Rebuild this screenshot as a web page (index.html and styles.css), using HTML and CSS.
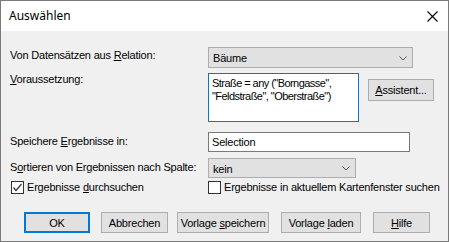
FILE: index.html
```html
<!DOCTYPE html>
<html lang="de">
<head>
    <meta charset="UTF-8">
    <title>Auswählen</title>
    <link rel="stylesheet" href="styles.css">
</head>
<body>
    <div class="window">
        <div class="titlebar">
            <span class="title">Auswählen</span>
            <span class="close">
                <svg width="11" height="11" viewBox="0 0 11 11"><path d="M0.5 0.5 L10.5 10.5 M10.5 0.5 L0.5 10.5" stroke="#000" stroke-width="1.1" fill="none"/></svg>
            </span>
        </div>

        <div class="dialog">
            <div class="row row-relation">
                <label class="lbl">Von Datensätzen aus <u>R</u>elation:</label>
                <div class="combo combo-wide">
                    <span>Bäume</span>
                    <svg class="arrow" width="8" height="5" viewBox="0 0 8 5"><path d="M0.5 0.5 L4 4 L7.5 0.5" stroke="#555" fill="none"/></svg>
                </div>
            </div>

            <div class="row row-cond">
                <label class="lbl"><u>V</u>oraussetzung:</label>
                <div class="memo">Straße = any ("Borngasse",<br>"Feldstraße", "Oberstraße")</div>
                <button class="btn btn-assist"><u>A</u>ssistent...</button>
            </div>

            <div class="row row-save">
                <label class="lbl">Speichere <u>E</u>rgebnisse in:</label>
                <div class="textbox">Selection</div>
            </div>

            <div class="row row-sort">
                <label class="lbl">S<u>o</u>rtieren von Ergebnissen nach Spalte:</label>
                <div class="combo combo-narrow">
                    <span>kein</span>
                    <svg class="arrow" width="8" height="5" viewBox="0 0 8 5"><path d="M0.5 0.5 L4 4 L7.5 0.5" stroke="#555" fill="none"/></svg>
                </div>
            </div>

            <div class="row row-checks">
                <label class="check check-first">
                    <span class="box">
                        <svg width="11" height="11" viewBox="0 0 11 11"><path d="M1.5 5.5 L4 8.5 L9.5 2" stroke="#333" stroke-width="1.2" fill="none"/></svg>
                    </span>
                    <span>Ergebnisse <u>d</u>urchsuchen</span>
                </label>
                <label class="check">
                    <span class="box"></span>
                    <span>Ergebnisse in aktuellem Kartenfenster suchen</span>
                </label>
            </div>

            <div class="buttons">
                <button class="btn btn-ok">OK</button>
                <button class="btn btn-cancel">Abbrechen</button>
                <button class="btn btn-save">Vorlage <u>s</u>peichern</button>
                <button class="btn btn-load">Vorlage <u>l</u>aden</button>
                <button class="btn btn-help"><u>H</u>ilfe</button>
            </div>
        </div>
    </div>
</body>
</html>
```

FILE: styles.css
```css
* {
    margin: 0;
    padding: 0;
    box-sizing: border-box;
}

body {
    font-family: 'Liberation Sans', Arial, sans-serif;
    font-size: 11px;
    letter-spacing: -0.2px;
    color: #000;
    background: #fff;
}

.window {
    width: 449px;
    height: 242px;
    border: 1px solid #7a7a7a;
    display: flex;
    flex-direction: column;
}

.titlebar {
    height: 30px;
    background: #fff;
    display: flex;
    align-items: center;
    justify-content: space-between;
    padding: 0 10px 1px 8px;
}

.title {
    font-family: 'Noto Sans', sans-serif;
    font-size: 12px;
    letter-spacing: 0;
}

.close {
    display: flex;
    padding-top: 1px;
}

.dialog {
    flex: 1;
    background: #f0f0f0;
    padding: 16px 0 0 9px;
}

.row {
    display: flex;
    align-items: flex-start;
}

.lbl {
    width: 198px;
    line-height: 13px;
    white-space: nowrap;
}

.row-relation {
    height: 21px;
    margin-bottom: 5px;
}

.row-relation .lbl {
    padding-top: 2px;
}

.combo {
    height: 21px;
    background: #e1e1e1;
    border: 1px solid #adadad;
    display: flex;
    align-items: center;
    justify-content: space-between;
    padding: 1px 5px 0 4px;
}

.combo-wide {
    width: 205px;
}

.combo-narrow {
    width: 148px;
    height: 20px;
}

.row-cond {
    height: 49px;
    margin-bottom: 10px;
}

.memo {
    width: 151px;
    height: 49px;
    background: #fff;
    border: 1px solid #0078d7;
    padding: 3px 3px;
    line-height: 13px;
    letter-spacing: -0.55px;
    white-space: nowrap;
}

.btn {
    font-family: inherit;
    font-size: 11px;
    letter-spacing: -0.2px;
    height: 21px;
    background: #e1e1e1;
    border: 1px solid #adadad;
    color: #000;
}

.btn-assist {
    width: 66px;
    height: 22px;
    margin: 6px 0 0 9px;
}

.row-save {
    height: 20px;
    margin-bottom: 6px;
}

.row-save .lbl,
.row-sort .lbl {
    padding-top: 3px;
}

.textbox {
    width: 202px;
    height: 20px;
    background: #fff;
    border: 1px solid #7a7a7a;
    padding: 2px 3px;
    line-height: 14px;
}

.row-sort {
    height: 20px;
    margin-bottom: 3px;
}

.row-checks {
    height: 15px;
}

.check {
    display: flex;
    align-items: center;
    gap: 3px;
    line-height: 13px;
    white-space: nowrap;
}

.check-first {
    width: 197px;
    margin-left: 1px;
}

.box {
    width: 13px;
    height: 13px;
    border: 1px solid #333;
    background: #fff;
    display: flex;
    align-items: center;
    justify-content: center;
}

.buttons {
    display: flex;
    margin: 16px 0 0 14px;
}

.btn-ok {
    width: 66px;
    border: 2px solid #0078d7;
    margin-right: 11px;
}

.btn-cancel {
    width: 67px;
    margin-right: 9px;
}

.btn-save {
    width: 92px;
    margin-right: 12px;
}

.btn-load {
    width: 80px;
    margin-right: 12px;
}

.btn-help {
    width: 57px;
}
```
